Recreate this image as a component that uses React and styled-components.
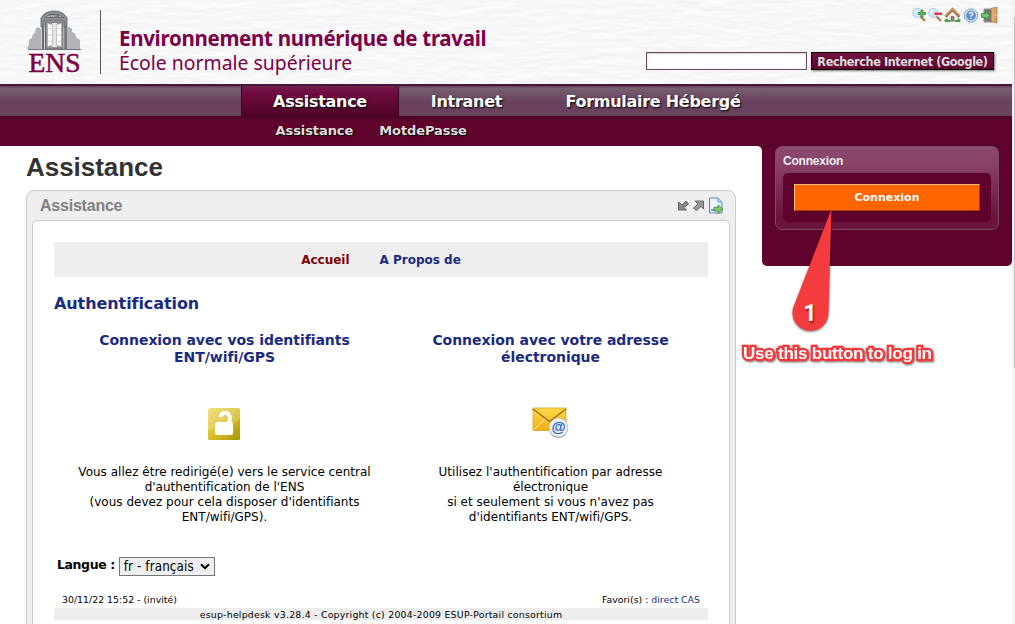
import React from "react";
import styled, { createGlobalStyle } from "styled-components";

const VERDANA = `Verdana, "DejaVu Sans", sans-serif`;
const TAHOMA = `Tahoma, "DejaVu Sans Condensed", "DejaVu Sans", sans-serif`;
const ARIAL = `Arial, "Liberation Sans", sans-serif`;

const Global = createGlobalStyle`
  * { box-sizing: border-box; }
  html, body { margin: 0; height: 624px; overflow: hidden; background: #fff; }
  body { font-family: ${VERDANA}; font-size: 12px; color: #000; }
  a { text-decoration: none; color: inherit; }
  h1, h2, h3, p { margin: 0; }
`;

const Screen = styled.div`
  display: flex;
  width: 1015px;
  height: 624px;
  overflow: hidden;
`;

const Page = styled.div`
  position: relative;
  width: 1012px;
  flex: none;
`;

const ScrollTrack = styled.div`
  width: 3px;
  background: #f1f1f1;
  padding: 17px 0 0 2px;
`;

const ScrollThumb = styled.div`
  height: 351px;
  background: #c1c1c1;
`;

const Header = styled.header`
  position: relative;
  display: flex;
  height: 84px;
  background: #f8f8f8;
`;

const Paper = styled.svg`
  position: absolute;
  inset: 0;
  width: 100%;
  height: 100%;
`;

const Brand = styled.div`
  position: relative;
  display: flex;
  flex: 1;
  padding: 10px 0 0 27px;
`;

const Emblem = styled.div`
  width: 74px;
  height: 64px;
  border-right: 1px solid #555558;
`;

const Wording = styled.div`
  padding: 16px 0 0 18px;
  color: #7d0047;
  font-family: "Noto Sans", sans-serif;
  white-space: nowrap;
`;

const BrandTitle = styled.div`
  font-weight: 700;
  font-size: 20.5px;
  line-height: 25px;
  letter-spacing: -0.3px;
`;

const BrandSub = styled.div`
  font-size: 19.4px;
  line-height: 23px;
`;

const Tools = styled.div`
  position: relative;
  display: flex;
  flex-direction: column;
  align-items: flex-end;
  padding: 7px 14px 0 0;
`;

const ToolIcons = styled.div`
  display: flex;
  height: 17px;
  gap: 2px;
`;

const Search = styled.form`
  display: flex;
  gap: 4px;
  margin: 28px 4px 0 0;
`;

const SearchField = styled.input`
  width: 161px;
  height: 18px;
  padding: 0 4px;
  border: 1px solid #6a4560;
  border-radius: 0;
  background: #fff;
  box-shadow: inset 0 1px 2px #ccc;
  outline: 0;
`;

const SearchButton = styled.button`
  width: 183px;
  height: 18px;
  padding: 0;
  border: 1px solid #000;
  border-radius: 0;
  background: linear-gradient(#6f1443, #5f022d);
  box-shadow: 1px 1px 2px rgba(0, 0, 0, 0.5);
  color: #ddd;
  font: bold 12.5px/15px ${TAHOMA};
  letter-spacing: -0.38px;
  white-space: nowrap;
`;

const Nav = styled.nav`
  display: flex;
  height: 32px;
  padding-left: 241px;
  border-top: 2px solid #41183a;
  background: linear-gradient(#69425d 0, #69425d 1px, #756070 2px, #69425d 16px);
`;

const NavItem = styled.a`
  width: ${(p) => p.$w}px;
  text-align: center;
  color: #fff;
  font: bold 16px/31px ${VERDANA};
  letter-spacing: -0.28px;
  text-shadow: 1px 1px 2px #000;
  white-space: nowrap;
  ${(p) =>
    p.$active &&
    `background: linear-gradient(#741d4c, #700b40 25%, #4d0425); border: solid #3a0422; border-width: 0 1px;`}
`;

const SubNav = styled.nav`
  display: flex;
  gap: 26px;
  height: 30px;
  padding-left: 275.5px;
  border-bottom: 1px solid #4a0a30;
  background: linear-gradient(#4c0424, #5f032c 6px);
`;

const SubItem = styled.a`
  color: #ddd;
  font: bold 13px/30px ${VERDANA};
  letter-spacing: -0.08px;
  text-shadow: 1px 1px 1px #000;
`;

const Body = styled.div`
  display: flex;
  background: linear-gradient(#5f032c 12px, #fff 12px);
`;

const Main = styled.main`
  width: 762px;
  height: 478px;
  padding: 5px 26px 0;
  border-top-right-radius: 5px;
  background: #fff;
`;

const PageTitle = styled.h1`
  color: #333;
  font: bold 26px/32px ${ARIAL};
  letter-spacing: -0.05px;
`;

const Portlet = styled.section`
  height: 460px;
  margin-top: 7px;
  padding: 0 5px;
  border: 1px solid #ccc;
  border-radius: 8px 8px 0 0;
  background: #eee;
`;

const PortletBar = styled.div`
  display: flex;
  align-items: center;
  justify-content: space-between;
  height: 29px;
  padding: 0 6px 0 8px;
`;

const PortletTitle = styled.h2`
  color: #808080;
  font: bold 16px/29px ${ARIAL};
  letter-spacing: -0.22px;
`;

const PortletActions = styled.div`
  display: flex;
  align-items: center;
  gap: 4px;
`;

const PortletBody = styled.div`
  height: 430px;
  padding: 21px 21px 0;
  border: 1px solid #ccc;
  border-radius: 5px 5px 0 0;
  background: #fff;
`;

const Tabs = styled.div`
  display: flex;
  justify-content: center;
  gap: 30px;
  height: 35px;
  background: #eee;
`;

const Tab = styled.a`
  color: ${(p) => (p.$current ? "#800000" : "#1b2b82")};
  font: bold 12px/36px ${VERDANA};
`;

const SectionTitle = styled.h2`
  margin-top: 17px;
  color: #1b2b82;
  font: bold 16px/20px ${VERDANA};
  letter-spacing: -0.08px;
`;

const Choices = styled.div`
  display: grid;
  grid-template-columns: 326px 326px;
  margin: 18px -6px 0 7px;
  text-align: center;
`;

const Choice = styled.div`
  display: flex;
  flex-direction: column;
  align-items: center;
  white-space: nowrap;
`;

const ChoiceTitle = styled.h3`
  height: 34px;
  padding-left: 1px;
  color: #1b2b82;
  font: bold 14px/17px ${VERDANA};
  letter-spacing: -0.05px;
`;

const ChoiceIcon = styled.div`
  display: flex;
  align-items: center;
  justify-content: center;
  height: 36px;
  margin: 40px 0 23px;
`;

const ChoiceText = styled.p`
  padding-left: 1px;
  font: 12px/15px ${VERDANA};
  letter-spacing: 0.02px;
`;

const Language = styled.label`
  display: flex;
  gap: 4px;
  margin: 32px 0 0 3px;
  font: bold 12.5px/15px ${VERDANA};
  letter-spacing: -0.4px;
`;

const Select = styled.div`
  display: flex;
  align-items: center;
  justify-content: space-between;
  width: 96px;
  height: 19px;
  padding: 0 4px;
  border: 1px solid #767676;
  background: #efefef;
  font: 13.33px/17px ${TAHOMA};
  letter-spacing: 0.1px;
  white-space: nowrap;
`;

const Status = styled.div`
  display: flex;
  justify-content: space-between;
  height: 15px;
  margin-top: 17px;
  padding: 0 8px;
  font: 9.4px/14px ${VERDANA};
  a { color: #1b2b82; }
`;

const Footer = styled.div`
  height: 12px;
  background: #eee;
  text-align: center;
  font: 9.4px/13px ${VERDANA};
  letter-spacing: 0.22px;
`;

const Sidebar = styled.aside`
  width: 250px;
  height: 120px;
  padding: 0 13px;
  border-radius: 0 0 5px 5px;
  background: #5f032c;
`;

const LoginBox = styled.section`
  height: 84px;
  padding: 0 7px;
  border: 1px solid #80486a;
  border-radius: 7px;
  background: linear-gradient(#8d4b6c, #88426a 20%, #6b153c 85%);
`;

const LoginTitle = styled.h2`
  height: 26px;
  color: #eee;
  font: bold 12px/28px ${ARIAL};
  letter-spacing: -0.2px;
`;

const LoginInner = styled.div`
  height: 49px;
  padding: 11px;
  border-radius: 5px;
  background: #5f032c;
`;

const LoginButton = styled.button`
  display: block;
  width: 186px;
  height: 27px;
  padding: 0;
  border: 1px solid;
  border-color: #ffc080 #a04000 #a04000 #ffc080;
  background: #ff6600;
  color: #fff;
  font: bold 11px/25px ${VERDANA};
`;

const Pointer = styled.svg`
  position: absolute;
  left: 782px;
  top: 200px;
  filter: drop-shadow(0 1px 1px rgba(0, 0, 0, 0.55));
`;

const PointerNumber = styled.div`
  position: absolute;
  left: 793px;
  top: 299px;
  width: 34px;
  color: #fff;
  text-align: center;
  font: bold 23.5px/28px Roboto, sans-serif;
  text-shadow: 1px 2px 2px rgba(70, 0, 0, 0.6);
`;

const PointerLabel = styled.div`
  position: absolute;
  left: 743px;
  top: 344px;
  color: #fff;
  white-space: nowrap;
  font: bold 17px/20px ${ARIAL};
  letter-spacing: -0.23px;
  -webkit-text-stroke: 4.5px #f23a3c;
  paint-order: stroke fill;
  filter: drop-shadow(1px 1px 1px rgba(0, 0, 0, 0.55));
`;

const EnsEmblem = () => (
  <svg width="56" height="70" viewBox="0 0 56 70">
    <path d="M0 39l2-5q-1-5 3-6 0-4 3-5 0-5 3-6l3 2v20zM38 39V20q1-3 4-3 4 1 3 5 4 1 4 5l4 3v9z" fill="#b2b3b6" />
    <path d="M1 39.500h53" stroke="#6f7276" />
    <path d="M16 12v27M38.500 12v27" stroke="#686c70" strokeWidth="2.500" />
    <path d="M14 17V8q4-7 13-7t13 7v9h-3v-6H17v6z" fill="#8a8e92" stroke="#55595d" strokeWidth=".8" />
    <path d="M17.500 7.500Q27 1 36.500 7.500z" fill="#bcbec0" stroke="#5e6266" strokeWidth=".7" />
    <text x="27" y="7.500" fontSize="4.500" fontFamily="Liberation Sans" textAnchor="middle" fill="#444">1794</text>
    <path d="M18.500 12h17.500v27H18.500z" fill="#8e9296" stroke="#686c70" />
    <path d="M25 13h5v24h-5z" fill="#e4e5e6" />
    <path d="M20.500 13l5 2v20l-5 2zM34.500 13l-5 2v20l5 2z" fill="#fff" stroke="#a0a3a6" strokeWidth=".6" />
    <path d="M21 19l4-1M21 25h4M21 31l4 1M30 18l4 1M30 25h4M30 32l4-1" stroke="#aaa" strokeWidth=".6" />
    <text x="1.500" y="61.800" fontSize="26.500" textLength="52" lengthAdjust="spacingAndGlyphs" fontFamily="Liberation Serif" fill="#7d0047" stroke="#7d0047" strokeWidth=".5">ENS</text>
  </svg>
);

const Magnifier = ({ minus }) => (
  <svg width="14" height="16" viewBox="0 0 14 16">
    <path d="M8 9l4.300 4.200" stroke="#bb8050" strokeWidth="2.400" strokeLinecap="round" />
    <circle cx="5.300" cy="6" r="4.600" fill="#d3e7fc" stroke="#afcceb" />
    <path d="M3 6q0-2.500 2.500-3" stroke="#fff" fill="none" />
    {minus ? (
      <path d="M6.500 5.500H14v2.500H6.500z" fill="#e93340" />
    ) : (
      <path d="M9 3h2v2.500h2.500v2H11V10H9V7.500H6.500v-2H9z" fill="#6cba5e" stroke="#2d8531" strokeWidth=".8" />
    )}
  </svg>
);

const Home = () => (
  <svg width="17" height="16" viewBox="0 0 17 16">
    <path d="M3 8l5.500-5L14 8v6H3z" fill="#f2eee7" stroke="#a99d8c" strokeWidth=".7" />
    <path d="M7 9.500h3V14H7z" fill="#8c8786" stroke="#55514f" strokeWidth=".5" />
    <path d="M1.500 9.500l7-7 7 7" stroke="#8b5c31" strokeWidth="2.700" fill="none" />
    <path d="M1.500 9l7-7 7 7" stroke="#d09c64" strokeWidth="1.300" fill="none" />
    <path d="M1 14.500v-2h2l2 1h1v1zM11 14.500v-1h2l1-1h2v2z" fill="#4dab46" stroke="#359638" strokeWidth=".8" />
  </svg>
);

const Help = () => (
  <svg width="16" height="16" viewBox="0 0 16 16">
    <circle cx="8" cy="8.500" r="6.600" fill="#e7f0fb" stroke="#6c99ce" />
    <circle cx="8" cy="8.500" r="4.900" fill="#5c8ec9" />
    <path d="M6.300 7q.1-1.600 1.700-1.600T9.700 7Q9.700 8 8 8.800v.9M8 10.800v1.200" stroke="#fff" strokeWidth="1.300" fill="none" />
  </svg>
);

const Exit = () => (
  <svg width="17" height="17" viewBox="0 0 17 17">
    <path d="M3 2h9v13H3z" fill="#747a73" stroke="#8d928d" />
    <path d="M10 1.500L16 0v16l-6-1.500z" fill="#d8a062" stroke="#ad7134" strokeWidth=".7" />
    <path d="M12 1.500v13" stroke="#e7b983" />
    <circle cx="14.500" cy="8.500" r=".8" fill="#fff0a0" />
    <path d="M.5 6.500h4V4L9 8.500 4.500 13v-2.500h-4z" fill="#72c46f" stroke="#278633" strokeWidth=".8" />
  </svg>
);

const Minimize = () => (
  <svg width="11" height="11" viewBox="0 0 11 11">
    <path d="M.5 2v8h8L6 7.500 10.500 4 8 1 4 5z" fill="#888" stroke="#505050" strokeWidth=".8" />
  </svg>
);

const Maximize = () => (
  <svg width="11" height="11" viewBox="0 0 11 11">
    <path d="M2 1h8.500v8L8 6.500 3.500 10.500 .5 8 5 4z" fill="#999" stroke="#505050" strokeWidth=".8" />
  </svg>
);

const Detach = () => (
  <svg width="16" height="17" viewBox="0 0 16 17">
    <path d="M1.500 1h8.500l4 4v11H1.500z" fill="#e8f2fc" stroke="#5889bd" />
    <path d="M10 1v4h4" fill="#b5d2ed" stroke="#5889bd" strokeWidth=".8" />
    <path d="M3 12h5v2H3z" fill="#5aa4dc" />
    <path d="M6 10.500h4V8l5 4.200-5 4V14H6z" fill="#86c56b" stroke="#368739" strokeWidth=".8" />
  </svg>
);

const Padlock = () => (
  <svg width="32" height="32" viewBox="0 0 32 32">
    <defs>
      <linearGradient id="gold" x1="0" y1="0" x2="1" y2="1">
        <stop offset="0" stopColor="#ecd968" />
        <stop offset=".55" stopColor="#d8bc25" />
        <stop offset="1" stopColor="#a39400" />
      </linearGradient>
    </defs>
    <rect width="32" height="32" rx="1.500" fill="url(#gold)" />
    <path d="M0 0h32v11Q20 21 0 22z" fill="#fff" opacity=".18" />
    <rect x="7" y="14" width="18" height="13" rx="2.500" fill="#fff" />
    <path d="M12.500 9Q13.500 5 17.500 5t4.500 5q0 3-2 6" stroke="#fff" strokeWidth="4" fill="none" />
  </svg>
);

const Mail = () => (
  <svg width="38" height="34" viewBox="-1 0 38 34">
    <defs>
      <linearGradient id="env" x1="0" y1="0" x2="0" y2="1">
        <stop offset="0" stopColor="#ffda4b" />
        <stop offset="1" stopColor="#f0ad15" />
      </linearGradient>
    </defs>
    <rect x="1" y="1" width="33" height="22.500" fill="url(#env)" stroke="#d3a02a" strokeWidth=".8" />
    <path d="M1.500 23L13 12M34 23L22 12" stroke="#fff0b0" />
    <path d="M1 2l16.500 12.500L34 2" stroke="#8a6d1b" strokeWidth="1.300" fill="none" />
    <circle cx="26.500" cy="21.500" r="9.500" fill="#999" />
    <circle cx="26.500" cy="20.500" r="9.500" fill="#eee" stroke="#bbb" strokeWidth=".6" />
    <text x="26.500" y="25" textAnchor="middle" fontFamily="Liberation Sans" fontWeight="bold" fontSize="14.500" fill="#1c62d1">@</text>
  </svg>
);

const Chevron = () => (
  <svg width="10" height="7" viewBox="0 0 10 7">
    <path d="M1 1.200l4 4 4-4" stroke="#000" strokeWidth="2" fill="none" />
  </svg>
);

export default function App() {
  return (
    <Screen>
      <Global />
      <Page>
        <Header>
          <Paper>
            <filter id="paper" x="0" y="0" width="100%" height="100%" colorInterpolationFilters="sRGB">
              <feTurbulence type="fractalNoise" baseFrequency=".03 .16" numOctaves="3" seed="4" />
              <feDiffuseLighting lightingColor="#fff" surfaceScale=".13" diffuseConstant="1.120">
                <feDistantLight azimuth="250" elevation="60" />
              </feDiffuseLighting>
            </filter>
            <rect width="100%" height="100%" filter="url(#paper)" />
          </Paper>
          <Brand>
            <Emblem><EnsEmblem /></Emblem>
            <Wording>
              <BrandTitle>Environnement numérique de travail</BrandTitle>
              <BrandSub>École normale supérieure</BrandSub>
            </Wording>
          </Brand>
          <Tools>
            <ToolIcons>
              <Magnifier />
              <Magnifier minus />
              <Home />
              <Help />
              <Exit />
            </ToolIcons>
            <Search>
              <SearchField />
              <SearchButton type="button">Recherche Internet (Google)</SearchButton>
            </Search>
          </Tools>
        </Header>
        <Nav>
          <NavItem $active $w={158}>Assistance</NavItem>
          <NavItem $w={135}>Intranet</NavItem>
          <NavItem $w={238}>Formulaire Hébergé</NavItem>
        </Nav>
        <SubNav>
          <SubItem>Assistance</SubItem>
          <SubItem>MotdePasse</SubItem>
        </SubNav>
        <Body>
          <Main>
            <PageTitle>Assistance</PageTitle>
            <Portlet>
              <PortletBar>
                <PortletTitle>Assistance</PortletTitle>
                <PortletActions><Minimize /><Maximize /><Detach /></PortletActions>
              </PortletBar>
              <PortletBody>
                <Tabs>
                  <Tab $current>Accueil</Tab>
                  <Tab>A Propos de</Tab>
                </Tabs>
                <SectionTitle>Authentification</SectionTitle>
                <Choices>
                  <Choice>
                    <ChoiceTitle>Connexion avec vos identifiants<br />ENT/wifi/GPS</ChoiceTitle>
                    <ChoiceIcon><Padlock /></ChoiceIcon>
                    <ChoiceText>
                      Vous allez être redirigé(e) vers le service central<br />d'authentification de l'ENS<br />
                      (vous devez pour cela disposer d'identifiants<br />ENT/wifi/GPS).
                    </ChoiceText>
                  </Choice>
                  <Choice>
                    <ChoiceTitle>Connexion avec votre adresse<br />électronique</ChoiceTitle>
                    <ChoiceIcon><Mail /></ChoiceIcon>
                    <ChoiceText>
                      Utilisez l'authentification par adresse<br />électronique<br />
                      si et seulement si vous n'avez pas<br />d'identifiants ENT/wifi/GPS.
                    </ChoiceText>
                  </Choice>
                </Choices>
                <Language>
                  Langue :
                  <Select>fr - français<Chevron /></Select>
                </Language>
                <Status>
                  <span>30/11/22 15:52 - (invité)</span>
                  <span>Favori(s) : <a href="#cas">direct CAS</a></span>
                </Status>
                <Footer>esup-helpdesk v3.28.4 - Copyright (c) 2004-2009 ESUP-Portail consortium</Footer>
              </PortletBody>
            </Portlet>
          </Main>
          <Sidebar>
            <LoginBox>
              <LoginTitle>Connexion</LoginTitle>
              <LoginInner><LoginButton type="button">Connexion</LoginButton></LoginInner>
            </LoginBox>
          </Sidebar>
        </Body>
        <Pointer width="60" height="140" viewBox="0 0 60 140">
          <path d="M49.500 9L11.500 107A18 18 0 1 0 46.500 112z" fill="#f43b3d" />
        </Pointer>
        <PointerNumber>1</PointerNumber>
        <PointerLabel>Use this button to log in</PointerLabel>
      </Page>
      <ScrollTrack><ScrollThumb /></ScrollTrack>
    </Screen>
  );
}
